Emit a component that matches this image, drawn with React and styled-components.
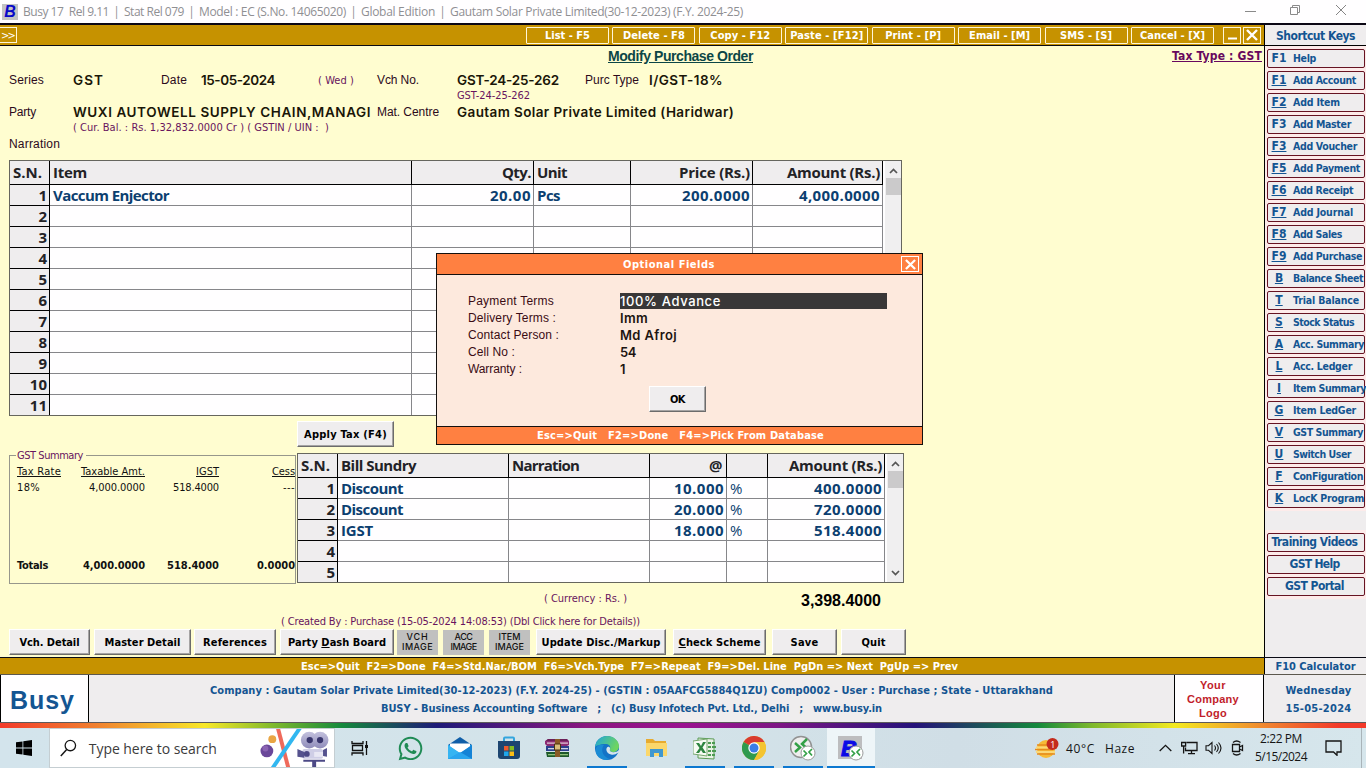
import React, { useLayoutEffect, useRef, useState } from "react";
import styled, { createGlobalStyle } from "styled-components";
import { FaWhatsapp } from "react-icons/fa";

const TAHOMA = `"DejaVu Sans Condensed", "DejaVu Sans", sans-serif`;
const GRID_FONT = `"Open Sans", "Noto Sans", sans-serif`;
const ARIAL = `"Liberation Sans", Arial, sans-serif`;
const SYSTEM = `Inter, "Liberation Sans", sans-serif`;

const Global = createGlobalStyle`
  * { box-sizing: border-box; }
  body { margin: 0; overflow: hidden; background: #fffdd0; }
  button { font: inherit; color: inherit; margin: 0; padding: 0; }
`;

/* Text tracked out or in so that it fills a given width. */
const FitSpan = styled.span`
  display: block;
  width: max-content;
  white-space: pre;
  flex: none;
`;
function Fit({ w, children }) {
  const ref = useRef(null);
  const [gap, setGap] = useState(0);
  useLayoutEffect(() => {
    const el = ref.current;
    const natural = el.getBoundingClientRect().width;
    setGap((w - natural) / Math.max(1, el.textContent.length));
  }, [w]);
  return (
    <FitSpan ref={ref} style={{ letterSpacing: `${gap}px` }}>
      {children}
    </FitSpan>
  );
}

const Screen = styled.div`
  width: 1366px;
  height: 768px;
  display: flex;
  flex-direction: column;
  position: relative;
  overflow: hidden;
`;

/* ---------- window title ---------- */
const TitleBar = styled.header`
  height: 23px;
  flex: none;
  display: flex;
  align-items: center;
  background: #fffeff;
  color: #8f8f93;
  font: 12px "Open Sans", "Noto Sans", sans-serif;
  padding-left: 2px;
`;
const AppIcon = styled.div`
  width: 16px;
  height: 16px;
  background: #c3c3c3;
  color: #0808c8;
  font: italic bold 16px/16px ${ARIAL};
  text-align: center;
  margin-right: 5px;
`;
const TitlePart = styled.div`
  & + & {
    display: flex;
    align-items: center;
  }
  & + &::before {
    content: "|";
    width: 15px;
    text-align: center;
    flex: none;
  }
`;
const WinControls = styled.div`
  margin-left: auto;
  display: flex;
  align-items: center;
  gap: 34px;
  padding: 0 19px 3px 0;
  svg { display: block; }
`;

/* ---------- body split ---------- */
const Body = styled.div`
  display: flex;
  height: 634px;
  flex: none;
  border-top: 2px solid #0b0714;
`;
const Main = styled.main`
  width: 1264px;
  display: flex;
  flex-direction: column;
`;
const Toolbar = styled.nav`
  height: 21px;
  flex: none;
  background: #c69200;
  border-bottom: 1px solid #0a0a14;
  display: flex;
  align-items: center;
  color: #fff;
  font: bold 11px ${TAHOMA};
`;
const Expander = styled.button`
  width: 17px;
  height: 16px;
  border: 1px solid #fff6d8;
  border-left: 0;
  background: none;
  font-weight: normal;
  line-height: 13px;
  padding-left: 1px;
`;
const ToolGroup = styled.div`
  margin-left: 509px;
  width: 688px;
  display: flex;
  justify-content: space-between;
`;
const ToolButton = styled.button`
  width: 83px;
  height: 17px;
  border: 1px solid #fff6d8;
  border-radius: 1px;
  background: none;
  display: flex;
  align-items: center;
  justify-content: center;
  padding-top: 1px;
`;
const SmallBox = styled.button`
  width: 18px;
  height: 17px;
  border: 1px solid #fff6d8;
  background: none;
  margin-left: ${(p) => p.$gap}px;
  display: flex;
  align-items: center;
  justify-content: center;
`;

const Form = styled.section`
  flex: 1;
  background: #fffdd0;
  font: 12px ${ARIAL};
  color: #2c0a1c;
`;
const Heading = styled.div`
  height: 21px;
  display: flex;
  justify-content: space-between;
  align-items: center;
  padding: 0 2px 1px 608px;
`;
const PageTitle = styled.h1`
  margin: 0;
  font: bold 14px ${ARIAL};
  color: #0c4646;
  text-decoration: underline;
`;
const TaxType = styled.div`
  font: bold 12px ${TAHOMA};
  color: #68085e;
  text-decoration: underline;
`;
const FieldRow = styled.div`
  display: grid;
  grid-template-columns: 64px 88px 40px 117px 59px 80px 128px 64px 1fr;
  height: ${(p) => p.$h}px;
  align-items: center;
  padding-left: 9px;
`;
const PartyRow = styled(FieldRow)`
  grid-template-columns: 64px 304px 80px 1fr;
`;
const Value = styled.span`
  font: 600 13.5px ${SYSTEM};
  color: #1a1608;
  white-space: nowrap;
`;
const Hint = styled.div`
  display: flex;
  align-items: center;
  height: ${(p) => p.$h}px;
  padding-left: ${(p) => p.$left}px;
  font: 11px ${TAHOMA};
  color: #68145e;
`;
const Purple = styled.span`
  font: 11px ${TAHOMA};
  color: #68145e;
`;

/* ---------- data grids ---------- */
const GridBox = styled.div`
  display: flex;
  width: ${(p) => p.$w}px;
  border: 1px solid #66665e;
  background: #fffeff;
`;
const Rows = styled.div`
  display: grid;
  grid-template-columns: ${(p) => p.$cols};
  grid-template-rows: 24px;
  grid-auto-rows: 21px;
  max-height: ${(p) => p.$h}px;
  overflow: hidden;
  font: bold 15px ${GRID_FONT};
`;
const Cell = styled.div`
  border-right: 1px solid ${(p) => (p.$dark || p.$head ? "#000" : "#86868a")};
  border-bottom: 1px solid ${(p) => (p.$dark || p.$head ? "#000" : "#86868a")};
  background: ${(p) => (p.$dark || p.$head ? "#efedee" : "#fffeff")};
  color: ${(p) => (p.$dark || p.$head ? "#222226" : "#0c3f70")};
  font-weight: ${(p) => (p.$plain ? 500 : 700)};
  display: flex;
  align-items: center;
  justify-content: ${(p) => (p.$right ? "flex-end" : "flex-start")};
  padding: 0 2px ${(p) => (p.$head ? 2 : 0)}px 3px;
`;
const Scroll = styled.div`
  width: 16px;
  margin-left: auto;
  background: #f0eff0;
  display: flex;
  flex-direction: column;
  align-items: center;
  padding-top: 7px;
`;
const Thumb = styled.div`
  width: 15px;
  height: 17px;
  margin-top: 4px;
  background: #cbcacb;
`;
const Down = styled.span`
  margin-top: auto;
  height: 12px;
  display: flex;
`;
const ItemGridWrap = styled.div`
  padding-left: 9px;
`;
const SundryWrap = styled.div`
  margin-top: 6px;
`;

const LowerArea = styled.div`
  display: flex;
  margin-top: 5px;
  height: 163px;
`;
const LeftCol = styled.div`
  width: 288px;
  padding-right: 1px;
  margin: 28px 0 0 9px;
`;
const Summary = styled.fieldset`
  margin: 0;
  padding: 0 0 0 7px;
  height: 135px;
  min-width: 0;
  border: 1px solid #97978c;
  color: #111;
  font: 11px ${TAHOMA};
`;
const Legend = styled.legend`
  padding: 0 3px 0 1px;
  margin-left: -1px;
  height: 13px;
  line-height: 13px;
  color: #68145e;
`;
const SummaryRow = styled.div`
  display: grid;
  grid-template-columns: 50px 78px 74px 76px;
  height: 16px;
  align-items: center;
  text-align: right;
  text-decoration: ${(p) => (p.$u ? "underline" : "none")};
  font-weight: ${(p) => (p.$b ? "bold" : "normal")};
  margin-top: ${(p) => p.$top || 0}px;
  > * { justify-self: end; }
  > :first-child { justify-self: start; }
`;
const RightCol = styled.div`
  display: flex;
  flex-direction: column;
`;
const WinButton = styled.button`
  width: ${(p) => p.$w}px;
  height: 26px;
  margin-left: ${(p) => p.$gap || 0}px;
  flex: none;
  background: #efedee;
  border: 1px solid;
  border-color: #fff #6c6c6c #6c6c6c #fff;
  box-shadow: inset -1px -1px 0 #a6a4a4;
  color: #000;
  font: bold 11px ${TAHOMA};
  display: flex;
  align-items: center;
  justify-content: center;
`;
const ImageButton = styled.button`
  width: 41px;
  height: 25px;
  margin-left: ${(p) => p.$gap}px;
  flex: none;
  border: 0;
  background: #c0c0bf;
  color: #111;
  font: 500 9px/10px ${SYSTEM};
  display: flex;
  flex-direction: column;
  align-items: center;
  justify-content: center;
`;
const TotalLine = styled.div`
  display: flex;
  align-items: center;
  height: 28px;
  padding-left: 544px;
`;
const Total = styled.span`
  margin-left: 174px;
  padding-top: 5px;
  font: bold 16px ${ARIAL};
  color: #000;
`;
const ButtonRow = styled.div`
  display: flex;
  align-items: center;
  padding-left: 9px;
  margin-top: -2px;
`;

/* ---------- shortcut panel ---------- */
const Side = styled.aside`
  width: 102px;
  border-left: 1px solid #000;
  background: #efedee;
  color: #145592;
  font: bold 10.5px ${TAHOMA};
  display: flex;
  flex-direction: column;
`;
const SideTitle = styled.div`
  height: 21px;
  flex: none;
  border-bottom: 1px solid #000;
  display: flex;
  align-items: center;
  justify-content: center;
  padding-top: 1px;
  font-size: 12px;
`;
const KeyList = styled.div`
  background: #fdebea;
  padding: 3px 1px 3px 2px;
  margin-bottom: ${(p) => p.$after || 0}px;
  display: flex;
  flex-direction: column;
  gap: 3px;
`;
const KeyButton = styled.button`
  height: 19px;
  border: 1px solid #671322;
  border-radius: 2px;
  background: #efedee;
  display: flex;
  align-items: center;
  justify-content: ${(p) => (p.$center ? "center" : "flex-start")};
  padding: 0 ${(p) => (p.$center ? 3 : 0)}px 2px 0;
  font-size: ${(p) => (p.$center ? 12 : 10.5)}px;
`;
const KeyCap = styled.span`
  width: 22px;
  margin-right: 3px;
  text-align: center;
  font-size: 12px;
  flex: none;
  text-decoration: ${(p) => (p.$u ? "underline" : "none")};
`;

/* ---------- bottom bars ---------- */
const HintBar = styled.div`
  height: 18px;
  flex: none;
  border-top: 1px solid #0a0a14;
  border-bottom: 1px solid #5c584e;
  display: flex;
  background: #c69200;
  color: #fff;
  font: bold 11px ${TAHOMA};
`;
const HintText = styled.div`
  width: 1264px;
  padding-left: 301px;
  display: flex;
  align-items: center;
`;
const Calc = styled.div`
  flex: 1;
  border-left: 1px solid #000;
  background: #efedee;
  color: #145592;
  display: flex;
  align-items: center;
  justify-content: center;
`;
const Footer = styled.footer`
  height: 48px;
  flex: none;
  display: flex;
  background: #efedee;
  border-bottom: 1px solid #5c5a5c;
  color: #145592;
  font: bold 11px ${TAHOMA};
`;
const BusyLogo = styled.div`
  width: 89px;
  background: #fffeff;
  border-left: 1px solid #000;
  border-right: 1px solid #000;
  padding: 3px 0 0 9px;
  display: flex;
  align-items: center;
  font: bold 25px ${ARIAL};
`;
const CompanyInfo = styled.div`
  width: 1085px;
  padding-top: 2px;
  display: flex;
  flex-direction: column;
  align-items: center;
  justify-content: center;
`;
const InfoLine = styled.div`
  height: 18px;
  display: flex;
  align-items: center;
`;
const CompanyLogo = styled.div`
  width: 90px;
  border-left: 1px solid #000;
  border-right: 1px solid #000;
  background: #fffeff;
  color: #c11d2b;
  font: bold 11px/14px ${ARIAL};
  display: flex;
  flex-direction: column;
  align-items: center;
  justify-content: center;
  padding: 0 12px 0 0;
`;
const Today = styled.div`
  flex: 1;
  padding: 2px 0 0 7px;
  display: flex;
  flex-direction: column;
  align-items: center;
  justify-content: center;
  line-height: 18px;
`;
const Rainbow = styled.div`
  height: 5px;
  flex: none;
  background: linear-gradient(90deg, #f33a2a 0%, #f08030 7%, #f8e828 15%, #7fb92c 20%, #14893c 25%, #1e1a78 32%, #8b1680 43%, #9a1290 50%, #7d1684 57%, #24127a 67%, #14893c 76%, #7fb92c 80%, #f4ea20 86%, #f08030 93%, #f33a2a 98%);
`;

/* ---------- taskbar ---------- */
const Taskbar = styled.div`
  height: 40px;
  flex: none;
  display: flex;
  align-items: center;
  background: linear-gradient(90deg, #d3e4ec, #d3e3e9 50%, #d0dee6 70%, #d6e6ec);
  color: #151515;
  font: 12px "Open Sans", "Noto Sans", sans-serif;
  svg { display: block; }
`;
const Start = styled.div`
  width: 49px;
  padding-left: 16px;
`;
const Search = styled.div`
  width: 286px;
  height: 40px;
  background: #fff;
  border: 1px solid #c5ced2;
  display: flex;
  align-items: center;
  padding-left: 10px;
  font-size: 14px;
  color: #3c3c3c;
  overflow: hidden;
`;
const SearchText = styled.span`
  margin-left: 12px;
  width: 173px;
`;
const Apps = styled.div`
  display: flex;
  height: 40px;
`;
const TaskItem = styled.div`
  width: ${(p) => p.$w || 49}px;
  height: 40px;
  display: flex;
  align-items: center;
  justify-content: center;
`;
const OpenApp = styled(TaskItem)`
  background-image: linear-gradient(#0c78d0, #0c78d0);
  background-repeat: no-repeat;
  background-size: ${(p) => (p.$active ? 48 : 40)}px 2px;
  background-position: center bottom;
  background-color: ${(p) => (p.$active ? "#eef5f8" : "transparent")};
`;
const Tray = styled.div`
  margin-left: auto;
  display: flex;
  align-items: center;
  height: 40px;
`;
const Slot = styled.div`
  width: ${(p) => p.$w}px;
  padding-left: ${(p) => p.$pad || 0}px;
  display: flex;
  align-items: center;
  flex: none;
`;
const Clock = styled.div`
  width: 72px;
  display: flex;
  flex-direction: column;
  align-items: center;
  line-height: 18px;
`;
const Peek = styled.div`
  width: 5px;
  height: 40px;
  border-left: 1px solid #a9b4b9;
`;

/* ---------- dialog ---------- */
const Dialog = styled.div`
  position: absolute;
  left: 436px;
  top: 253px;
  width: 487px;
  height: 192px;
  border: 1px solid #14100e;
  background: #fde9dd;
  display: flex;
  flex-direction: column;
`;
const DialogTitle = styled.div`
  height: 21px;
  flex: none;
  background: #ff8041;
  border-bottom: 1px solid #14100e;
  color: #fff;
  font: bold 11px ${TAHOMA};
  display: flex;
  align-items: center;
  padding: 0 3px 0 186px;
  justify-content: space-between;
`;
const CloseBox = styled.button`
  width: 18px;
  height: 16px;
  border: 1px solid #fff;
  background: none;
  display: flex;
  align-items: center;
  justify-content: center;
`;
const DialogBody = styled.div`
  flex: 1;
  padding: 17px 35px 0 31px;
  font: 12px ${ARIAL};
  color: #3a0c14;
`;
const Option = styled.div`
  display: grid;
  grid-template-columns: 152px 267px;
  height: 17px;
  align-items: center;
`;
const OptionValue = styled.div`
  height: 16px;
  display: flex;
  align-items: center;
  background: ${(p) => (p.$on ? "#393737" : "none")};
  color: ${(p) => (p.$on ? "#fff" : "#1c1410")};
  font: ${(p) => (p.$on ? 500 : 600)} 13px ${SYSTEM};
`;
const OkLine = styled.div`
  padding: 9px 0 0 181px;
`;
const DialogFoot = styled.div`
  height: 18px;
  flex: none;
  background: #ff8041;
  border-top: 1px solid #14100e;
  color: #fff;
  font: bold 11px ${TAHOMA};
  display: flex;
  align-items: center;
  padding-left: 100px;
`;

/* ---------- drawings ---------- */
const Cross = ({ s = 12, c = "#fff", w = 2.4 }) => (
  <svg width={s} height={s} viewBox="0 0 12 12">
    <path d="M1 1l10 10M11 1L1 11" stroke={c} strokeWidth={w} />
  </svg>
);
const Arrow = ({ down }) => (
  <svg width="9" height="6" viewBox="0 0 9 6">
    <path d={down ? "M1 1l3.5 3.6L8 1" : "M1 5l3.5-3.6L8 5"} fill="none" stroke="#555" strokeWidth="1.7" />
  </svg>
);
const SearchArt = () => (
  <svg width="76" height="38" viewBox="0 0 76 38">
    <defs>
      <linearGradient id="cam" x1="0" y1="0" x2="0" y2="1">
        <stop offset="0" stopColor="#c3c1dd" /><stop offset="1" stopColor="#8f8cba" />
      </linearGradient>
    </defs>
    <circle cx="8" cy="22" r="6.500" fill="#6a4799" />
    <circle cx="6.500" cy="19.500" r="3" fill="#8a63b2" />
    <circle cx="13.500" cy="10" r="4" fill="#e9a544" />
    <path d="M19-2l11 42" stroke="#ef6a5b" strokeWidth="4" />
    <path d="M42-2L12 42" stroke="#31b7f0" strokeWidth="4" />
    <circle cx="51" cy="11" r="8.500" fill="url(#cam)" /><circle cx="62" cy="11" r="8.500" fill="url(#cam)" />
    <circle cx="51.500" cy="11" r="3.200" fill="#39366d" /><circle cx="62" cy="11" r="3.200" fill="#39366d" />
    <rect x="44" y="20" width="21" height="10" rx="2" fill="#cfcee6" />
    <path d="M39 20l7 3v6l-7-1zM65 21l4-2v9l-4-1z" fill="#55528e" />
    <circle cx="48.500" cy="25" r="3" fill="#4c4986" /><rect x="56" y="23" width="9" height="5" fill="#e9e8f4" />
    <path d="M45 31h22v2H58v6h-4v-6h-9z" fill="#4c4986" />
  </svg>
);
const TaskView = () => (
  <svg width="18" height="16" viewBox="0 0 18 16" fill="none" stroke="#111" strokeWidth="1.300">
    <path d="M1 1v2.500h11V1M1 15.500V13h11v2.500M1.500 5.500h10v5h-10zM15.500 1v14" />
    <path d="M14 5h3v3h-3z" fill="#111" stroke="none" />
  </svg>
);
const Mail = () => (
  <svg width="24" height="22" viewBox="0 0 24 22">
    <path d="M0 8l12-8 12 8z" fill="#0f5ea8" /><path d="M0 8h24v14H0z" fill="#1f9be6" />
    <path d="M2 6.500h20v3l-10 7L2 9.500z" fill="#fff" /><path d="M0 8l12 8L0 22z" fill="#35b4f2" />
    <path d="M24 8L12 16l12 6z" fill="#1583d6" /><path d="M0 22l12-7 12 7z" fill="#2aa5ee" />
  </svg>
);
const Store = () => (
  <svg width="24" height="24" viewBox="0 0 24 24">
    <path d="M7 6V2.500Q7 1.500 8 1.500h8q1 0 1 1V6" fill="none" stroke="#35a6de" strokeWidth="2" />
    <path d="M1 5h22v15q0 3-3 3H4q-3 0-3-3z" fill="#1d4570" />
    <path d="M7 10h4.500v4.500H7z" fill="#ee5a2c" /><path d="M12.500 10H17v4.500h-4.500z" fill="#84bd20" />
    <path d="M7 15.500h4.500V20H7z" fill="#20a6ea" /><path d="M12.500 15.500H17V20h-4.500z" fill="#fdbd14" />
  </svg>
);
const Rar = () => (
  <svg width="25" height="20" viewBox="0 0 25 20">
    <path d="M0 3l3-2h19l2 2v4l-2 1H2L0 6z" fill="#8d2c73" /><path d="M3 1h19l1 2H1z" fill="#6b2058" />
    <path d="M2 4.500h21v1.200H2z" fill="#e5cfdd" />
    <path d="M1 8h23v5H1z" fill="#2b3f8d" /><path d="M3 10h20v1.300H3z" fill="#cfd4e4" />
    <path d="M1 14h23v5H2z" fill="#1e5a2a" /><path d="M3 16h20v1.300H3z" fill="#8fc37a" />
    <path d="M10 1h5v18h-5z" fill="#8b5a26" /><path d="M9.500 6h6v6h-6z" fill="#d9bd7c" stroke="#463213" />
  </svg>
);
const Edge = () => (
  <svg width="24" height="24" viewBox="0 0 24 24">
    <defs>
      <linearGradient id="eg" x1="0" y1="0" x2="1" y2="0.400">
        <stop offset="0" stopColor="#1da5dc" /><stop offset="1" stopColor="#6ed560" />
      </linearGradient>
    </defs>
    <circle cx="12" cy="12" r="12" fill="#1473c6" />
    <path d="M0 11C1 4 6 0 12 0c7 0 12 5 12 10 0 4-3 6-6 6-2 0-4-1-3-3 1-3-1-5-5-5-5 0-9 2-10 3z" fill="url(#eg)" />
    <path d="M9 9c-4 5-1 12 6 14C7 26-1 20 1 12c1-3 5-4 8-3z" fill="#1a8bd4" />
    <path d="M12 11.500c-1.500 2-.5 6 4 7 3 .6 5-.5 6.800-1.500 1-.6 1.400-1.800 1.200-3-2 2-4.500 2.500-7 2-2-.4-2.500-1.700-2-3 .5-2-2-3-3-1.500z" fill="#d6e5ec" />
  </svg>
);
const Folder = () => (
  <svg width="22" height="20" viewBox="0 0 22 20">
    <path d="M1 1h7l2 2h11v15H1z" fill="#e7ab30" /><path d="M1 5h21v13H1z" fill="#fbd76b" />
    <path d="M5 19v-8h13v8h-4v-4H9v4z" fill="#3f97cf" />
  </svg>
);
const Excel = () => (
  <svg width="24" height="23" viewBox="0 0 24 23">
    <path d="M5 1l16 1v20l-16-1z" fill="#eaf3e6" stroke="#5a9b55" />
    <path d="M0 4l14-2v17L0 17z" fill="#f7fbf4" stroke="#77a870" />
    <path d="M3 6h3l2 3 2-4h3l-3.500 5.500L13 16h-3l-2-3-2 3H3l3.500-5z" fill="#2e8540" />
    <path d="M15 6h7M15 10h8M15 14h8M15 18h7" stroke="#4c9b52" strokeWidth="2" />
    <path d="M18.500 4v16" stroke="#eaf3e6" />
  </svg>
);
const Chrome = () => (
  <svg width="24" height="24" viewBox="0 0 24 24">
    <circle cx="12" cy="12" r="12" fill="#eebf2c" />
    <path d="M12 12L1.600 6A12 12 0 0122.400 6z" fill="#d93b30" />
    <path d="M12 12L1.600 6A12 12 0 0012 24l5-9z" fill="#2f9a4e" />
    <path d="M12 6h10.400A12 12 0 0112 24l5-9z" fill="#f4c430" />
    <circle cx="12" cy="12" r="5.700" fill="#fff" /><circle cx="12" cy="12" r="4.500" fill="#3b7de6" />
  </svg>
);
const Remote = () => (
  <g>
    <circle cx="18" cy="18" r="7" fill="#fff" stroke="#9b9b9b" />
    <path d="M13.500 15.500l3 3-3 3M22 14l-3 3 3 3.500" fill="none" stroke="#34a047" strokeWidth="1.700" />
  </g>
);
const RemoteApp = () => (
  <svg width="26" height="26" viewBox="0 0 26 26">
    <circle cx="11" cy="12" r="10.500" fill="#eee" stroke="#929292" strokeWidth="1.500" />
    <path d="M5 8l5 4.500L5 17M17 4l-5 5 4 3.500" fill="none" stroke="#34a047" strokeWidth="2.500" />
    <Remote />
  </svg>
);
const BusyApp = () => (
  <svg width="26" height="26" viewBox="0 0 26 26">
    <path d="M0 1h24v23H0z" fill="#bdbdbf" />
    <text x="3" y="21" fontFamily="Liberation Sans" fontWeight="bold" fontStyle="italic" fontSize="22" fill="#0a0ae6" stroke="#0a0ae6" strokeWidth="1">B</text>
    <Remote />
  </svg>
);
const Weather = () => (
  <svg width="24" height="22" viewBox="0 0 24 22">
    <circle cx="11" cy="12" r="9" fill="#f6bb36" />
    <path d="M2 8h16M0 12.500h18M2 17h18" stroke="#e68a1c" strokeWidth="1.600" />
    <path d="M1 10.500h17M1 15h19" stroke="#fbd978" strokeWidth="1.800" />
    <circle cx="17.500" cy="7" r="6" fill="#c42b1c" />
    <text x="15.200" y="10.500" fontFamily="Open Sans" fontSize="9" fill="#fff">1</text>
  </svg>
);
const line = { fill: "none", stroke: "#151515", strokeWidth: 1.3 };

/* ---------- data ---------- */
const titleParts = [["Busy 17  Rel 9.11", 86], ["Stat Rel 079", 60], ["Model : EC (S.No. 14065020)", 147], ["Global Edition", 74], ["Gautam Solar Private Limited(30-12-2023) (F.Y. 2024-25)", 293]];
const tools = [["List - F5", 45], ["Delete - F8", 62], ["Copy - F12", 60], ["Paste - [F12]", 73], ["Print - [P]", 56], ["Email - [M]", 61], ["SMS - [S]", 52], ["Cancel - [X]", 65]];
const keys = [
  ["F1", "Help", 23, 1], ["F1", "Add Account", 63], ["F2", "Add Item", 47], ["F3", "Add Master", 58, 1], ["F3", "Add Voucher", 64],
  ["F5", "Add Payment", 67], ["F6", "Add Receipt", 60], ["F7", "Add Journal", 60], ["F8", "Add Sales", 49], ["F9", "Add Purchase", 69],
  ["B", "Balance Sheet", 70], ["T", "Trial Balance", 66], ["S", "Stock Status", 61], ["A", "Acc. Summary", 71], ["L", "Acc. Ledger", 59],
  ["I", "Item Summary", 73], ["G", "Item LedGer", 63], ["V", "GST Summary", 70], ["U", "Switch User", 58], ["F", "ConFiguration", 70], ["K", "LocK Program", 71],
];
const itemHead = [["S.N.", 29], ["Item", 34], ["Qty.", 29, 1], ["Unit", 30], ["Price (Rs.)", 71, 1], ["Amount (Rs.)", 93, 1]];
const itemRow = [["Vaccum Enjector", 116], ["20.00", 41, 1], ["Pcs", 23], ["200.0000", 68, 1], ["4,000.0000", 81, 1]];
const sundryHead = [["S.N.", 29], ["Bill Sundry", 75], ["Narration", 67], ["@", 15, 1], null, ["Amount (Rs.)", 93, 1]];
const sundryRows = [
  [["Discount", 62], null, ["10.000", 50, 1], ["%", 13, 0, 1], ["400.0000", 68, 1]],
  [["Discount", 62], null, ["20.000", 50, 1], ["%", 13, 0, 1], ["720.0000", 68, 1]],
  [["IGST", 32], null, ["18.000", 50, 1], ["%", 13, 0, 1], ["518.4000", 68, 1]],
];

function DataGrid({ width, cols, height, head, rows, count, down }) {
  const blank = head.slice(1).map(() => null);
  return (
    <GridBox $w={width}>
      <Rows $cols={cols} $h={height}>
        {head.map((c, i) => (
          <Cell key={`h${i}`} $head $right={c && c[2]}>{c && <Fit w={c[1]}>{c[0]}</Fit>}</Cell>
        ))}
        {Array.from({ length: count }, (_, r) => (
          <React.Fragment key={r}>
            <Cell $dark $right>{r + 1}</Cell>
            {(rows[r] || blank).map((c, i) => (
              <Cell key={i} $right={c && c[2]} $plain={c && c[3]}>{c && <Fit w={c[1]}>{c[0]}</Fit>}</Cell>
            ))}
          </React.Fragment>
        ))}
      </Rows>
      <Scroll>
        <Arrow />
        <Thumb />
        {down && <Down><Arrow down /></Down>}
      </Scroll>
    </GridBox>
  );
}

export default function App() {
  return (
    <Screen>
      <Global />
      <TitleBar>
        <AppIcon>B</AppIcon>
        {titleParts.map(([t, w]) => <TitlePart key={t}><Fit w={w}>{t}</Fit></TitlePart>)}
        <WinControls>
          <svg width="11" height="11"><path d="M0 6.500h11" stroke="#8a8a8a" /></svg>
          <svg width="11" height="11"><path d="M.5 2.500h7v7h-7zM2.500 2.500v-2h7v7h-2" fill="none" stroke="#8a8a8a" /></svg>
          <Cross s={12} c="#858585" w={1} />
        </WinControls>
      </TitleBar>

      <Body>
        <Main>
          <Toolbar>
            <Expander><Fit w={13}>&gt;&gt;</Fit></Expander>
            <ToolGroup>
              {tools.map(([t, w]) => <ToolButton key={t}><Fit w={w}>{t}</Fit></ToolButton>)}
            </ToolGroup>
            <SmallBox $gap={9}><svg width="9" height="9"><path d="M0 7.500h9" stroke="#fff" strokeWidth="2" /></svg></SmallBox>
            <SmallBox $gap={2}><Cross s={12} /></SmallBox>
          </Toolbar>

          <Form>
            <Heading>
              <PageTitle><Fit w={145}>Modify Purchase Order</Fit></PageTitle>
              <TaxType><Fit w={90}>Tax Type : GST</Fit></TaxType>
            </Heading>
            <FieldRow $h={26}>
              <Fit w={35}>Series</Fit>
              <Value><Fit w={31}>GST</Fit></Value>
              <Fit w={26}>Date</Fit>
              <Value><Fit w={74}>15-05-2024</Fit></Value>
              <Purple><Fit w={36}>( Wed )</Fit></Purple>
              <Fit w={42}>Vch No.</Fit>
              <Value><Fit w={102}>GST-24-25-262</Fit></Value>
              <Fit w={54}>Purc Type</Fit>
              <Value><Fit w={74}>I/GST-18%</Fit></Value>
            </FieldRow>
            <Hint $left={457} $h={4}><Fit w={73}>GST-24-25-262</Fit></Hint>
            <PartyRow $h={30}>
              <Fit w={27}>Party</Fit>
              <Value><Fit w={298}>WUXI AUTOWELL SUPPLY CHAIN,MANAGI</Fit></Value>
              <Fit w={62}>Mat. Centre</Fit>
              <Value><Fit w={277}>Gautam Solar Private Limited (Haridwar)</Fit></Value>
            </PartyRow>
            <Hint $left={73} $h={0}><Fit w={256}>{"( Cur. Bal. : Rs. 1,32,832.0000 Cr ) ( GSTIN / UIN :  )"}</Fit></Hint>
            <FieldRow $h={33}><Fit w={51}>Narration</Fit></FieldRow>

            <ItemGridWrap>
              <DataGrid width={893} cols="40px 362px 122px 97px 122px 130px" height={254} head={itemHead} rows={[itemRow]} count={11} />
            </ItemGridWrap>

            <LowerArea>
              <LeftCol>
                <Summary>
                  <Legend><Fit w={66}>GST Summary</Fit></Legend>
                  <SummaryRow $u $top={1}>
                    <Fit w={44}>Tax Rate</Fit><Fit w={64}>Taxable Amt.</Fit><Fit w={23}>IGST</Fit><Fit w={23}>Cess</Fit>
                  </SummaryRow>
                  <SummaryRow>
                    <Fit w={23}>18%</Fit><Fit w={56}>4,000.0000</Fit><Fit w={46}>518.4000</Fit><Fit w={12}>---</Fit>
                  </SummaryRow>
                  <SummaryRow $b $top={62}>
                    <Fit w={31}>Totals</Fit><Fit w={62}>4,000.0000</Fit><Fit w={52}>518.4000</Fit><Fit w={38}>0.0000</Fit>
                  </SummaryRow>
                </Summary>
              </LeftCol>
              <RightCol>
                <WinButton $w={97}><Fit w={83}>Apply Tax (F4)</Fit></WinButton>
                <SundryWrap>
                  <DataGrid width={607} cols="40px 171px 141px 77px 41px 117px" height={128} head={sundryHead} rows={sundryRows} count={5} down />
                </SundryWrap>
              </RightCol>
            </LowerArea>

            <TotalLine>
              <Purple><Fit w={83}>( Currency : Rs. )</Fit></Purple>
              <Total><Fit w={80}>3,398.4000</Fit></Total>
            </TotalLine>
            <Hint $left={281} $h={19}><Fit w={359}>( Created By : Purchase (15-05-2024 14:08:53) (Dbl Click here for Details))</Fit></Hint>
            <ButtonRow>
              <WinButton $w={81}><Fit w={60}>Vch. Detail</Fit></WinButton>
              <WinButton $w={97} $gap={4}><Fit w={76}>Master Detail</Fit></WinButton>
              <WinButton $w={82} $gap={3}><Fit w={64}>References</Fit></WinButton>
              <WinButton $w={114} $gap={4}><Fit w={98}>Party <u>D</u>ash Board</Fit></WinButton>
              <ImageButton $gap={3}><Fit w={22}>VCH</Fit><Fit w={31}>IMAGE</Fit></ImageButton>
              <ImageButton $gap={5}><Fit w={18}>ACC</Fit><Fit w={26}>IMAGE</Fit></ImageButton>
              <ImageButton $gap={5}><Fit w={22}>ITEM</Fit><Fit w={29}>IMAGE</Fit></ImageButton>
              <WinButton $w={130} $gap={6}><Fit w={119}>Update Disc./Markup</Fit></WinButton>
              <WinButton $w={93} $gap={7}><Fit w={82}><u>C</u>heck Scheme</Fit></WinButton>
              <WinButton $w={65} $gap={6}><Fit w={28}>Save</Fit></WinButton>
              <WinButton $w={65} $gap={4}><Fit w={24}>Quit</Fit></WinButton>
            </ButtonRow>
          </Form>
        </Main>

        <Side>
          <SideTitle><Fit w={79}>Shortcut Keys</Fit></SideTitle>
          <KeyList $after={19}>
            {keys.map(([k, t, w, plain]) => (
              <KeyButton key={k + t}><KeyCap $u={!plain}>{k}</KeyCap><Fit w={w}>{t}</Fit></KeyButton>
            ))}
          </KeyList>
          <KeyList>
            <KeyButton $center><Fit w={86}>Training Videos</Fit></KeyButton>
            <KeyButton $center><Fit w={50}>GST Help</Fit></KeyButton>
            <KeyButton $center><Fit w={59}>GST Portal</Fit></KeyButton>
          </KeyList>
        </Side>
      </Body>

      <HintBar>
        <HintText><Fit w={657}>{"Esc=>Quit  F2=>Done  F4=>Std.Nar./BOM  F6=>Vch.Type  F7=>Repeat  F9=>Del. Line  PgDn => Next  PgUp => Prev"}</Fit></HintText>
        <Calc><Fit w={80}>F10 Calculator</Fit></Calc>
      </HintBar>
      <Footer>
        <BusyLogo><Fit w={65}>Busy</Fit></BusyLogo>
        <CompanyInfo>
          <InfoLine><Fit w={843}>Company : Gautam Solar Private Limited(30-12-2023) (F.Y. 2024-25) - (GSTIN : 05AAFCG5884Q1ZU) Comp0002 - User : Purchase ; State - Uttarakhand</Fit></InfoLine>
          <InfoLine><Fit w={501}>{"BUSY - Business Accounting Software   ;   (c) Busy Infotech Pvt. Ltd., Delhi   ;   www.busy.in"}</Fit></InfoLine>
        </CompanyInfo>
        <CompanyLogo><Fit w={26}>Your</Fit><Fit w={52}>Company</Fit><Fit w={28}>Logo</Fit></CompanyLogo>
        <Today><Fit w={66}>Wednesday</Fit><Fit w={66}>15-05-2024</Fit></Today>
      </Footer>
      <Rainbow />

      <Taskbar>
        <Start>
          <svg width="16" height="16" viewBox="0 0 16 16"><path d="M0 2.300L6.500 1.400v6.100H0zM7.300 1.300L16 0v7.500H7.300zM0 8.400h6.500v6.200L0 13.700zM7.300 8.400H16V16l-8.700-1.300z" fill="#000" /></svg>
        </Start>
        <Search>
          <svg width="17" height="18" viewBox="0 0 17 18"><circle cx="10.500" cy="6.500" r="5.300" {...line} /><path d="M6.800 10.500L.8 17" {...line} strokeWidth="1.500" /></svg>
          <SearchText><Fit w={128}>Type here to search</Fit></SearchText>
          <SearchArt />
        </Search>
        <Apps>
          <TaskItem $w={50}><TaskView /></TaskItem>
          <TaskItem $w={51}><FaWhatsapp size={27} color="#1f8b55" /></TaskItem>
          <TaskItem $w={48}><Mail /></TaskItem>
          <TaskItem><Store /></TaskItem>
          <TaskItem><Rar /></TaskItem>
          <OpenApp><Edge /></OpenApp>
          <TaskItem><Folder /></TaskItem>
          <OpenApp><Excel /></OpenApp>
          <OpenApp><Chrome /></OpenApp>
          <OpenApp><RemoteApp /></OpenApp>
          <OpenApp $w={48} $active><BusyApp /></OpenApp>
        </Apps>
        <Tray>
          <Slot $w={31}><Weather /></Slot>
          <Slot $w={39}><Fit w={29}>40°C</Fit></Slot>
          <Slot $w={54}><Fit w={30}>Haze</Fit></Slot>
          <Slot $w={22}><svg width="13" height="8"><path d="M.7 7l5.800-5.600L12.300 7" {...line} /></svg></Slot>
          <Slot $w={24}><svg width="17" height="14"><path d="M5.500 1.500H16v8H4.500v-3M10.500 9.500v3M7 12.700h7M.6 1.500h4v3.500h-4zM2.600 5v7.500" {...line} /></svg></Slot>
          <Slot $w={26}><svg width="17" height="14"><path d="M1 4.700h2.500L7 1.500v11L3.500 9.300H1zM9.500 4.500q2 2.500 0 5M11.500 3q3.500 4 0 8M13.500 1.500q5 5.500 0 11" {...line} strokeWidth="1.100" /></svg></Slot>
          <Slot $w={14}><svg width="13" height="16"><path d="M1.500 4.500h7v7h-7zM8.500 7l3-1.500v5L8.500 9M2 2.500Q5.500-.5 9.500 2.500M2 13.500q3.500 3 7.500 0" {...line} /></svg></Slot>
          <Clock><Fit w={42}>2:22 PM</Fit><Fit w={52}>5/15/2024</Fit></Clock>
          <Slot $w={44} $pad={8}><svg width="17" height="16"><path d="M1 1h15v11h-4v3.300L8.500 12H1z" {...line} /></svg></Slot>
          <Peek />
        </Tray>
      </Taskbar>

      <Dialog>
        <DialogTitle>
          <Fit w={92}>Optional Fields</Fit>
          <CloseBox><Cross s={11} /></CloseBox>
        </DialogTitle>
        <DialogBody>
          <Option><Fit w={86}>Payment Terms</Fit><OptionValue $on><Fit w={101}>100% Advance</Fit></OptionValue></Option>
          <Option><Fit w={88}>Delivery Terms :</Fit><OptionValue><Fit w={28}>Imm</Fit></OptionValue></Option>
          <Option><Fit w={91}>Contact Person :</Fit><OptionValue><Fit w={57}>Md Afroj</Fit></OptionValue></Option>
          <Option><Fit w={47}>Cell No :</Fit><OptionValue><Fit w={16}>54</Fit></OptionValue></Option>
          <Option><Fit w={54}>Warranty :</Fit><OptionValue>1</OptionValue></Option>
          <OkLine><WinButton $w={57}><Fit w={15}>OK</Fit></WinButton></OkLine>
        </DialogBody>
        <DialogFoot><Fit w={287}>{"Esc=>Quit   F2=>Done   F4=>Pick From Database"}</Fit></DialogFoot>
      </Dialog>
    </Screen>
  );
}
